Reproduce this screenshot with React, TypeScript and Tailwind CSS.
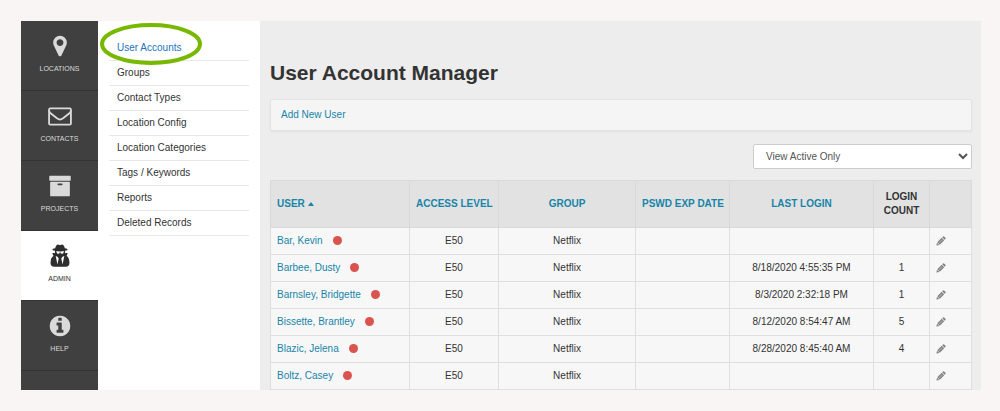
import { useState } from 'react'
import type { ReactNode } from 'react'

interface User {
  name: string
  accessLevel: string
  group: string
  pswdExpDate?: string
  lastLogin?: string
  loginCount?: number
}

interface Section {
  label: string
  icon: ReactNode
}

const users: User[] = [
  { name: 'Bar, Kevin', accessLevel: 'E50', group: 'Netflix' },
  { name: 'Barbee, Dusty', accessLevel: 'E50', group: 'Netflix', lastLogin: '8/18/2020 4:55:35 PM', loginCount: 1 },
  { name: 'Barnsley, Bridgette', accessLevel: 'E50', group: 'Netflix', lastLogin: '8/3/2020 2:32:18 PM', loginCount: 1 },
  { name: 'Bissette, Brantley', accessLevel: 'E50', group: 'Netflix', lastLogin: '8/12/2020 8:54:47 AM', loginCount: 5 },
  { name: 'Blazic, Jelena', accessLevel: 'E50', group: 'Netflix', lastLogin: '8/28/2020 8:45:40 AM', loginCount: 4 },
  { name: 'Boltz, Casey', accessLevel: 'E50', group: 'Netflix' },
]

const menuItems = [
  'User Accounts',
  'Groups',
  'Contact Types',
  'Location Config',
  'Location Categories',
  'Tags / Keywords',
  'Reports',
  'Deleted Records',
]

const sections: Section[] = [
  {
    label: 'Locations',
    icon: (
      <path d="M1152 640q0-106-75-181t-181-75-181 75-75 181 75 181 181 75 181-75 75-181zm256 0q0 109-33 179l-364 774q-16 33-47.5 52t-67.5 19-67.5-19-46.5-52l-365-774q-33-70-33-179 0-212 150-362t362-150 362 150 150 362z" />
    ),
  },
  {
    label: 'Contacts',
    icon: (
      <g fill="none" stroke="currentColor" strokeWidth="136" strokeLinejoin="round">
        <rect x="80" y="330" width="1632" height="1210" rx="90" />
        <path d="M80 520q40 110 160 205l430 340q130 95 226 95t226-95l430-340q120-95 160-205" />
      </g>
    ),
  },
  {
    label: 'Projects',
    icon: (
      <path
        fillRule="evenodd"
        d="M160 128h1472q64 0 64 64v256q0 64-64 64H160q-64 0-64-64V192q0-64 64-64zm64 448h1344q64 0 64 64v960q0 64-64 64H224q-64 0-64-64V640q0-64 64-64zm544 128a64 64 0 0 0 0 128h256a64 64 0 0 0 0-128z"
      />
    ),
  },
  {
    label: 'Admin',
    icon: (
      <path d="M704 1536l96-448-96-128-128-64zm384 0l128-640-128 64-96 128zm104-980q-2-4-4-6-10-8-96-8-70 0-167 19-7 2-21 2t-21-2q-97-19-167-19-86 0-96 8-2 2-4 6 2 18 4 27 2 3 7.5 6.5t7.5 10.5q2 4 7.5 20.5t7 20.5 7.5 17 8.5 17 9 14 12 13.5 14 9.5 17.5 8 20.5 4 24.5 2q36 0 59-12.5t32.5-30 14.5-34.5 11.5-29.5 17.5-12.5h12q11 0 17.5 12.5t11.5 29.5 14.5 34.5 32.5 30 59 12.5q13 0 24.5-2t20.5-4 17.5-8 14-9.5 12-13.5 9-14 8.5-17 7.5-17 7-20.5 7.5-20.5q2-7 7.5-10.5t7.5-6.5q2-9 4-27zm408 879q0 121-73 190t-194 69h-874q-121 0-194-69t-73-190q0-61 4.5-118t19-125.5 37.5-123.5 63.5-103.5 93.5-74.5l-90-220h214q-22-64-22-128 0-12 2-32-194-40-194-96 0-57 210-99 17-62 51.5-134t70.5-114q32-37 76-37 30 0 84 31t84 31 84-31 84-31q44 0 76 37 36 42 70.5 114t51.5 134q210 42 210 99 0 56-194 96 7 81-20 160h214l-82 225q63 33 107.5 96.5t65.5 143.5 29 151.5 8 157.5z" />
    ),
  },
  {
    label: 'Help',
    icon: (
      <path d="M1152 1376v-160q0-14-9-23t-23-9h-96v-512q0-14-9-23t-23-9h-320q-14 0-23 9t-9 23v160q0 14 9 23t23 9h96v320h-96q-14 0-23 9t-9 23v160q0 14 9 23t23 9h448q14 0 23-9t9-23zm-128-896v-160q0-14-9-23t-23-9h-192q-14 0-23 9t-9 23v160q0 14 9 23t23 9h192q14 0 23-9t9-23zm640 416q0 209-103 385.5t-279.5 279.5-385.5 103-385.5-103-279.5-279.5-103-385.5 103-385.5 279.5-279.5 385.5-103 385.5 103 279.5 279.5 103 385.5z" />
    ),
  },
]

const PencilIcon = () => (
  <svg className="h-[10px] w-[10px]" viewBox="0 0 20 20" fill="#808080">
    <path d="M13.4 1.6a2.4 2.4 0 0 1 3.4 0l1.6 1.6a2.4 2.4 0 0 1 0 3.4l-1 1-5-5z" />
    <path d="M11.4 3.6l5 5-8.8 8.8-5-5z" />
    <path d="M2 13.4l4.6 4.6-5.8 1.2z" />
    <path d="M12 6.4l1.4 1.4-6.6 6.6-1.4-1.4z" fill="#adadad" />
  </svg>
)

const App = () => {
  const [section, setSection] = useState('Admin')
  const [view, setView] = useState('active')

  return (
    <div className="h-screen bg-[#faf5f5] p-[21px] pr-[19px] font-['Liberation_Sans',Arial,sans-serif] text-[10px] leading-[14px] text-[#333]">
      <div className="flex h-full overflow-hidden bg-[#ededed]">
        {/* Sections */}
        <nav className="flex w-[77px] shrink-0 flex-col bg-[#404040]">
          {sections.map((item) => (
            <button
              key={item.label}
              type="button"
              onClick={() => setSection(item.label)}
              className={`flex h-[70px] shrink-0 flex-col items-center border-b border-[#333] pt-[13px] text-[7px] leading-[10px] uppercase ${
                section === item.label ? 'bg-white text-[#2e2e2e]' : 'bg-[#404040] text-[#dadada]'
              }`}
            >
              <svg className="mb-[6px] h-6 w-6" viewBox="0 0 1792 1792" fill="currentColor">
                {item.icon}
              </svg>
              {item.label}
            </button>
          ))}
        </nav>

        {/* Admin menu */}
        <aside className="w-[162px] shrink-0 bg-white px-[11px] pt-[15px]">
          <ul>
            {menuItems.map((item, i) => (
              <li key={item} className="relative border-b border-[#e8e8e8]">
                <a
                  href="#"
                  className={`block px-2 py-[5px] ${i === 0 ? 'text-[#1c74bb]' : 'text-[#333]'}`}
                >
                  {item}
                </a>
                {i === 0 && (
                  <svg
                    className="pointer-events-none absolute -top-[14px] -left-[10px] h-11 w-[104px]"
                    viewBox="0 0 104 44"
                    fill="none"
                  >
                    <ellipse cx="52" cy="22" rx="49" ry="19" stroke="#78b800" strokeWidth="4" />
                  </svg>
                )}
              </li>
            ))}
          </ul>
        </aside>

        {/* Content */}
        <main className="min-w-0 flex-1 pt-10 pr-[9px] pl-[10px]">
          <h1 className="text-[21px] leading-6 font-bold">User Account Manager</h1>

          <div className="mt-[14px] rounded-xs border border-[#e2e2e2] bg-[#f5f5f5] px-[10px] py-2 shadow-xs">
            <a href="#" className="block text-[#1785a8]">Add New User</a>
          </div>

          <div className="mt-[13px] flex justify-end">
            <select
              aria-label="Account status"
              value={view}
              onChange={(e) => setView(e.target.value)}
              className="h-[25px] w-[219px] rounded-xs border border-[#ccc] bg-white pl-2 text-[#555]"
            >
              <option value="active">View Active Only</option>
              <option value="inactive">View Inactive Only</option>
              <option value="all">View All</option>
            </select>
          </div>

          <table className="mt-[11px] w-full table-fixed border-collapse text-center [&_td]:border [&_td]:border-[#dfdfdf] [&_td]:px-[6px] [&_th]:border [&_th]:border-[#d9d9d9] [&_th]:px-[6px]">
            <colgroup>
              <col />
              <col className="w-[89px]" />
              <col className="w-[137px]" />
              <col className="w-[94px]" />
              <col className="w-[144px]" />
              <col className="w-[56px]" />
              <col className="w-[42px]" />
            </colgroup>
            <thead>
              <tr className="h-[47px] bg-[#e2e2e2] whitespace-nowrap uppercase">
                <th className="text-left">
                  <a href="#" className="flex items-center gap-[3px] text-[#1785a8]">
                    User
                    <svg className="h-[4px] w-[6px]" viewBox="0 0 6 4" fill="currentColor">
                      <path d="M3 0l3 4H0z" />
                    </svg>
                  </a>
                </th>
                <th><a href="#" className="text-[#1785a8]">Access Level</a></th>
                <th><a href="#" className="text-[#1785a8]">Group</a></th>
                <th><a href="#" className="text-[#1785a8]">Pswd Exp Date</a></th>
                <th><a href="#" className="text-[#1785a8]">Last Login</a></th>
                <th>Login<br />Count</th>
                <th></th>
              </tr>
            </thead>
            <tbody>
              {users.map((user) => (
                <tr key={user.name} className="h-[27px] bg-[#f7f7f7]">
                  <td>
                    <div className="flex items-center gap-[10px]">
                      <a href="#" className="text-[#1785a8]">{user.name}</a>
                      <span className="mb-px h-[9px] w-[9px] rounded-full bg-[#d9534f]"></span>
                    </div>
                  </td>
                  <td>{user.accessLevel}</td>
                  <td>{user.group}</td>
                  <td>{user.pswdExpDate}</td>
                  <td>{user.lastLogin}</td>
                  <td>{user.loginCount}</td>
                  <td>
                    <button type="button" aria-label={`Edit ${user.name}`} className="flex items-center">
                      <PencilIcon />
                    </button>
                  </td>
                </tr>
              ))}
              <tr className="h-[27px] bg-[#f7f7f7]">
                <td></td>
                <td></td>
                <td></td>
                <td></td>
                <td></td>
                <td></td>
                <td></td>
              </tr>
            </tbody>
          </table>
        </main>
      </div>
    </div>
  )
}

export default App
